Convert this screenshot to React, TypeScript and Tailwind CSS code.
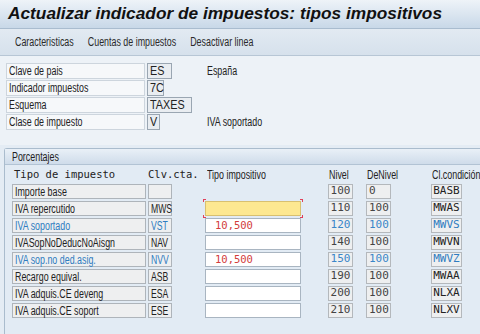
import React from "react";

const rows = [
  { t: "Importe base", c: "", v: "", n: "100", d: "0", k: "BASB", blue: false },
  { t: "IVA repercutido", c: "MWS", v: "", n: "110", d: "100", k: "MWAS", blue: false, focus: true },
  { t: "IVA soportado", c: "VST", v: "10,500", n: "120", d: "100", k: "MWVS", blue: true },
  { t: "IVASopNoDeducNoAisgn", c: "NAV", v: "", n: "140", d: "100", k: "MWVN", blue: false },
  { t: "IVA sop.no ded.asig.", c: "NVV", v: "10,500", n: "150", d: "100", k: "MWVZ", blue: true },
  { t: "Recargo equival.", c: "ASB", v: "", n: "190", d: "100", k: "MWAA", blue: false },
  { t: "IVA adquis.CE deveng", c: "ESA", v: "", n: "200", d: "100", k: "NLXA", blue: false },
  { t: "IVA adquis.CE soport", c: "ESE", v: "", n: "210", d: "100", k: "NLXV", blue: false },
];

const head = [
  { l: "Clave de pais", v: "ES", w: "w-[25px]", d: "España" },
  { l: "Indicador impuestos", v: "7C", w: "w-[17px]", d: "" },
  { l: "Esquema", v: "TAXES", w: "w-[45px]", d: "" },
  { l: "Clase de impuesto", v: "V", w: "w-[13px]", d: "IVA soportado" },
];

const mono = "font-['DejaVu_Sans_Mono',monospace]";

// SAP GUI uses a narrow sans; squeeze Liberation Sans to match
function N({ children, s = "scale-x-[0.74]" }: { children: React.ReactNode; s?: string }) {
  return <span className={`inline-block whitespace-nowrap origin-left ${s}`}>{children}</span>;
}

export default function App() {
  return (
    <div className="w-[480px] h-[334px] overflow-hidden bg-[#e4ecf4] text-[#222] text-[12px] font-['Liberation_Sans',Arial,sans-serif]">
      <div className="h-[29px] flex items-center pl-[8px] bg-gradient-to-b from-[#eef3f8] to-[#c8d8e8] border-b border-[#a9bccf]">
        <h1 className="text-[17.3px] font-bold italic text-[#111]">
          Actualizar indicador de impuestos: tipos impositivos
        </h1>
      </div>
      <div className="h-[27px] flex items-center pl-[15px] text-[#2a2a2a] bg-gradient-to-b from-[#e2eaf2] to-[#d6e1ec] border-b border-[#b7c6d5]">
        <N>
          <span>Caracteristicas</span>
          <span className="ml-[19px]">Cuentas de impuestos</span>
          <span className="ml-[19px]">Desactivar linea</span>
        </N>
      </div>
      <div className="pt-[7px] pl-[6px] bg-[#edf2f7] pb-[15px] flex flex-col gap-[1px]">
        {head.map((h) => (
          <div key={h.l} className="flex items-center h-[16px]">
            <div className="w-[139px] shrink-0 h-[16px] pl-[2px] flex items-center bg-[#f6f8fa] border border-[#cdd5dd]">
              <N>{h.l}</N>
            </div>
            <div className="ml-[2px] w-[60px] shrink-0">
              <div className={`${h.w} h-[16px] flex items-center pl-[2px] bg-[#e9edf1] border border-[#9aa6b2]`}>
                <N s="scale-x-[0.9]">{h.v}</N>
              </div>
            </div>
            {h.d && <N>{h.d}</N>}
          </div>
        ))}
      </div>
      <div className="ml-[4px] mt-[3px] border-l border-t border-[#aabccd] rounded-tl-[3px] bg-[#e2ebf4] h-[190px]">
        <div className="h-[16px] flex items-center pl-[7px] bg-gradient-to-b from-[#e9f0f7] to-[#cfdcea] border-b border-[#b2c3d4]">
          <N>Porcentajes</N>
        </div>
        <div className="flex items-center h-[17px] mt-[1px] pl-[7px]">
          <span className={`${mono} text-[10.5px] w-[136px] shrink-0 pl-[2px]`}>Tipo de impuesto</span>
          <span className={`${mono} text-[10.5px] w-[57px] shrink-0`}>Clv.cta.</span>
          <span className="w-[124px] shrink-0 pl-[2px]"><N>Tipo impositivo</N></span>
          <span className="w-[38px] shrink-0"><N>Nivel</N></span>
          <span className="w-[65px] shrink-0"><N>DeNivel</N></span>
          <span className="shrink-0"><N>Cl.condición</N></span>
        </div>
        <div className="flex flex-col gap-[2px] mt-[1px] pl-[7px]">
          {rows.map((r) => {
            const col = r.blue ? "text-[#2f7cc0]" : "text-[#222]";
            const num = r.blue ? "text-[#3a86c8]" : "text-[#444]";
            return (
              <div key={r.t} className="flex items-center h-[15px]">
                <div className={`w-[134px] shrink-0 h-[15px] flex items-center pl-[2px] bg-[#eeeff0] border border-[#aeb4ba] ${col}`}>
                  <N>{r.t}</N>
                </div>
                <div className={`w-[24px] shrink-0 ml-[2px] h-[15px] flex items-center pl-[2px] bg-[#eeeff0] border border-[#aeb4ba] ${col}`}>
                  <N s="scale-x-[0.72]">{r.c}</N>
                </div>
                <div className="ml-[33px] w-[96px] shrink-0 h-[15px] relative">
                  {r.focus ? (
                    <div className="w-full h-full bg-[#fde891] border border-[#d8c070]">
                      <span className="absolute -left-[2px] -top-[2px] w-[3px] h-[3px] border-l border-t border-[#e0405a]" />
                      <span className="absolute -right-[2px] -top-[2px] w-[3px] h-[3px] border-r border-t border-[#e0405a]" />
                      <span className="absolute -left-[2px] -bottom-[2px] w-[3px] h-[3px] border-l border-b border-[#e0405a]" />
                      <span className="absolute -right-[2px] -bottom-[2px] w-[3px] h-[3px] border-r border-b border-[#e0405a]" />
                    </div>
                  ) : r.c ? (
                    <div className={`w-full h-full bg-white border border-[#a9b5c1] flex items-center pl-[9px] ${mono} text-[10.5px] text-[#d23c3c]`}>
                      {r.v}
                    </div>
                  ) : null}
                </div>
                <div className={`ml-[27px] w-[25px] shrink-0 h-[15px] flex items-center justify-center ${mono} text-[11px] bg-[#eeeff0] border border-[#b4b8bc] ${num}`}>
                  {r.n}
                </div>
                <div className={`ml-[13px] w-[25px] shrink-0 h-[15px] flex items-center pl-[2px] ${mono} text-[11px] bg-[#eeeff0] border border-[#b4b8bc] ${num}`}>
                  {r.d}
                </div>
                <div className={`ml-[40px] w-[31px] shrink-0 h-[15px] flex items-center justify-center ${mono} text-[11px] bg-[#eeeff0] border border-[#b4b8bc] ${col}`}>
                  {r.k}
                </div>
              </div>
            );
          })}
        </div>
      </div>
    </div>
  );
}
